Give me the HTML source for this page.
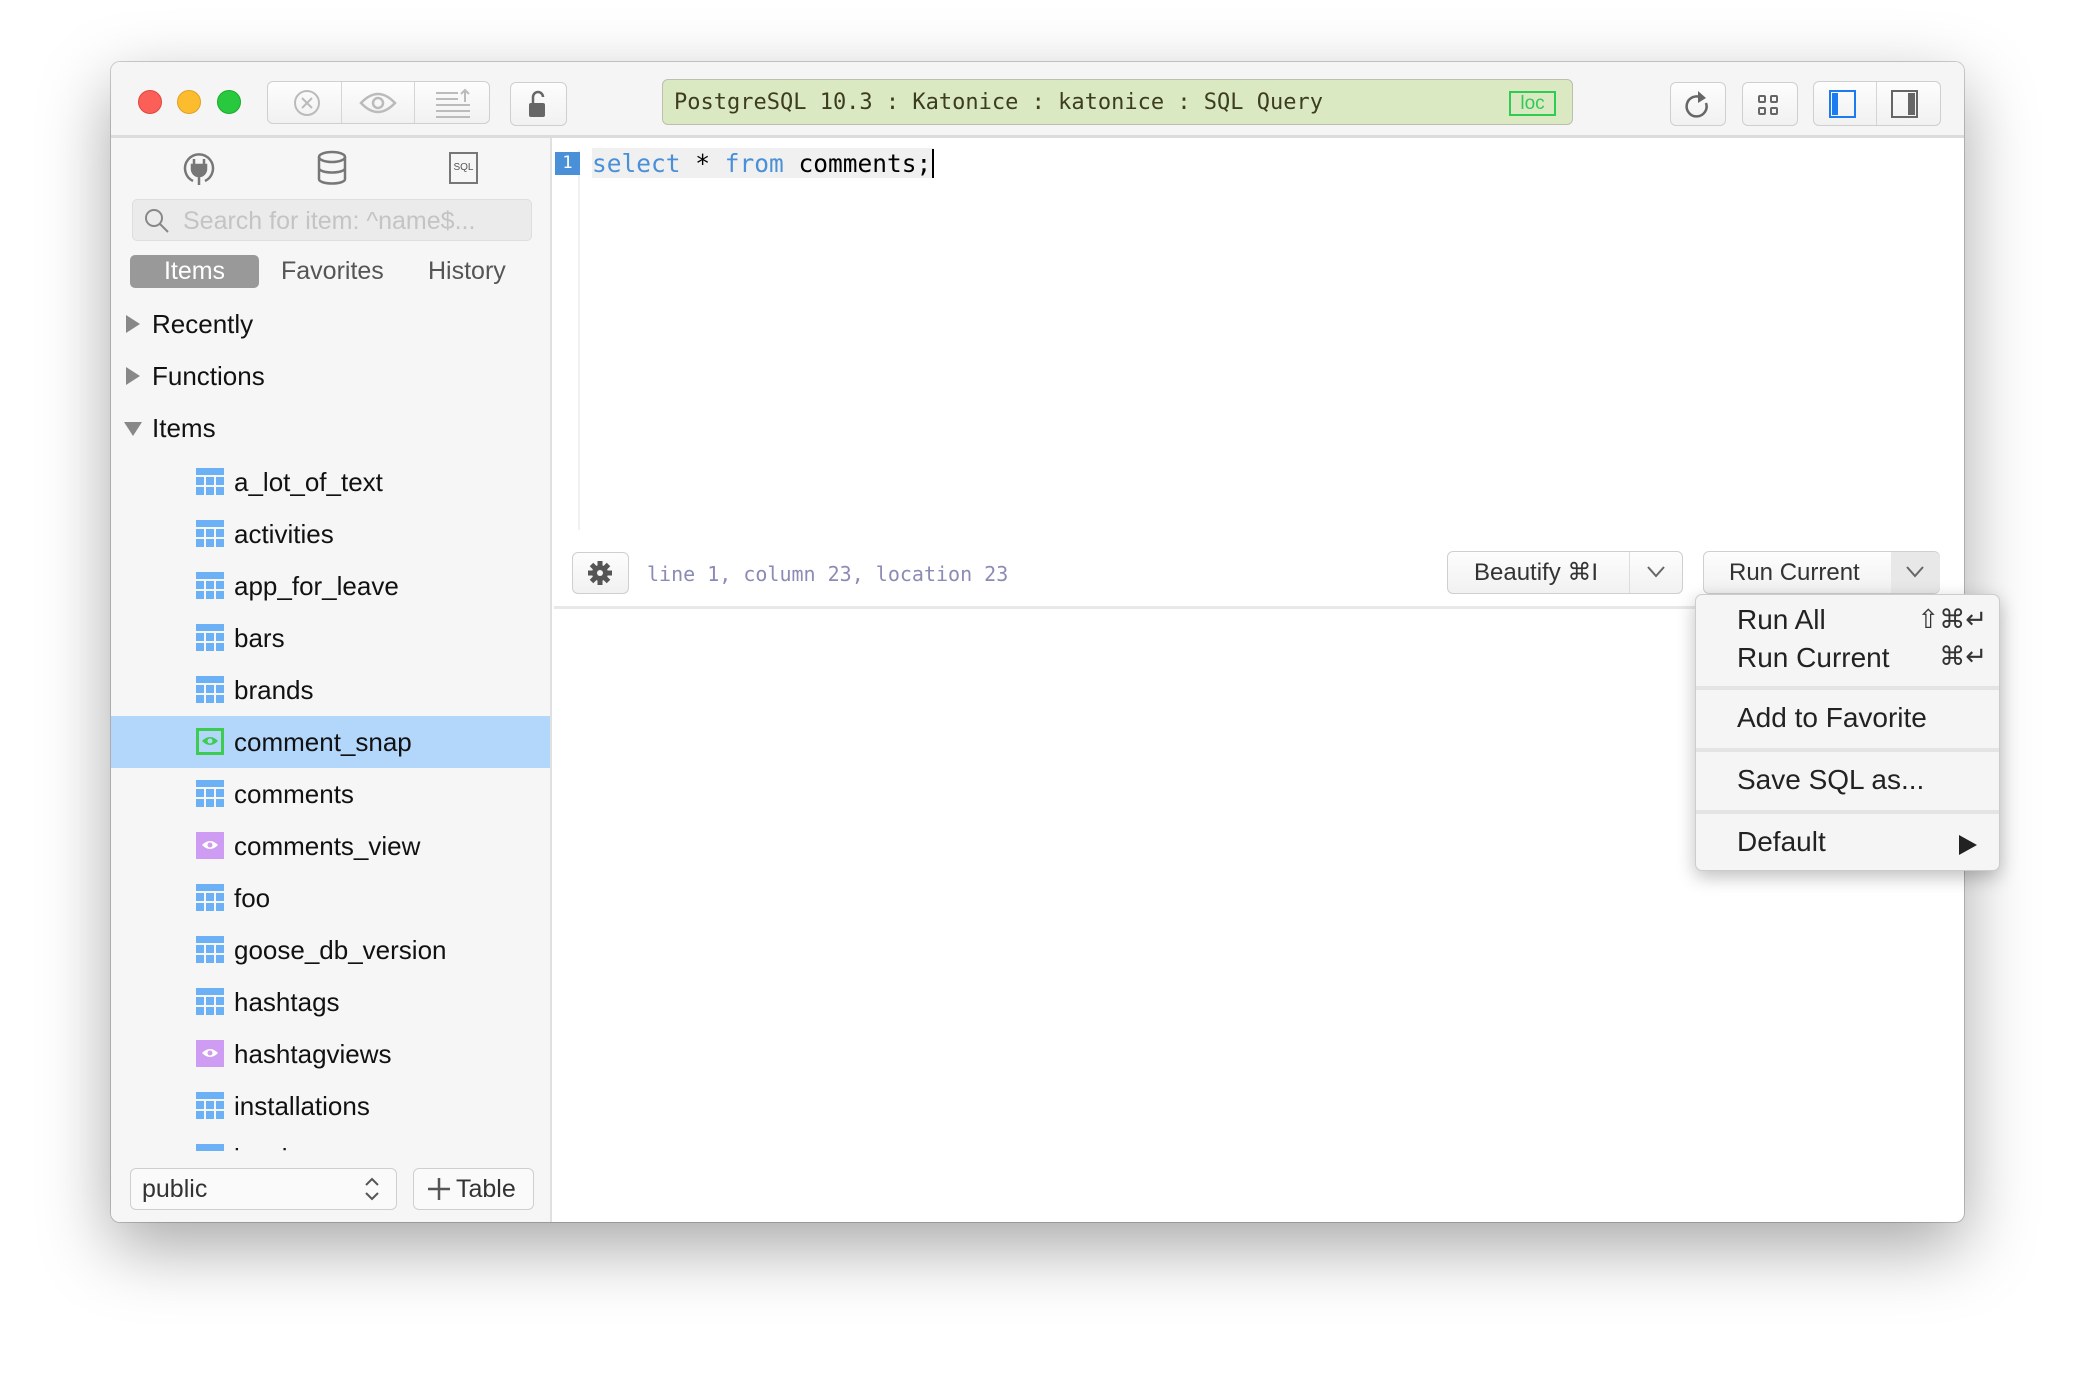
<!DOCTYPE html>
<html><head><meta charset="utf-8"><style>
*{box-sizing:border-box;margin:0;padding:0}
body{width:2076px;height:1384px;background:#fff;position:relative;overflow:hidden;font-family:"Liberation Sans",sans-serif}
.a{position:absolute}
.win{left:111px;top:62px;width:1853px;height:1160px;border-radius:9px;background:#fff;box-shadow:0 25px 70px rgba(0,0,0,.35),0 0 0 1px rgba(0,0,0,.18);overflow:hidden}
.tb{left:0;top:0;width:1853px;height:76px;background:#f5f5f5;border-bottom:3px solid #dcdcdc}
.btn{background:linear-gradient(#fdfdfd,#f1f1f1);border:1px solid #cfcfcf;border-radius:6px}
.dot{width:24px;height:24px;border-radius:50%}
.side{left:0;top:76px;width:441px;height:1084px;background:#f6f6f6;border-right:2px solid #e0e0e0}
.row{position:absolute;left:0;width:439px;height:52px;font-size:26px;color:#111;line-height:52px}
.ti{position:absolute;left:85px;top:12px;width:28px;height:27px}
.row span{position:absolute;left:123px}
.mono{font-family:"DejaVu Sans Mono","Liberation Mono",monospace}
.mi{position:absolute;left:41px;font-size:28px;color:#222}
.sep{position:absolute;left:0;width:304px;height:4px;background:#e4e4e4}
</style></head><body>
<div class="a win">
 <div class="a tb">
  <div class="a dot" style="left:27px;top:28px;background:#fc5f57;border:1px solid #e0443e"></div>
  <div class="a dot" style="left:66px;top:28px;background:#fdbc2e;border:1px solid #dea123"></div>
  <div class="a dot" style="left:106px;top:28px;background:#28c83f;border:1px solid #1aab29"></div>
  <div class="a btn" style="left:156px;top:19px;width:223px;height:43px"></div>
  <div class="a" style="left:230px;top:20px;width:1px;height:41px;background:#d5d5d5"></div>
  <div class="a" style="left:303px;top:20px;width:1px;height:41px;background:#d5d5d5"></div>
  <svg class="a" style="left:180px;top:25px" width="32" height="32" viewBox="0 0 32 32"><circle cx="16" cy="16" r="12" fill="none" stroke="#bbb" stroke-width="2"/><path d="M11 11l10 10M21 11l-10 10" stroke="#bbb" stroke-width="2"/></svg>
  <svg class="a" style="left:248px;top:27px" width="38" height="28" viewBox="0 0 38 28"><path d="M2 14Q19 -4 36 14Q19 32 2 14Z" fill="none" stroke="#bbb" stroke-width="2.5"/><circle cx="19" cy="14" r="5" fill="none" stroke="#bbb" stroke-width="2.5"/></svg>
  <svg class="a" style="left:324px;top:26px" width="36" height="30" viewBox="0 0 36 30"><path d="M1 5h22M1 11h22M1 17h34M1 23h34M1 29h34M30 2v12M26 6l4-4 4 4" stroke="#bbb" stroke-width="2" fill="none"/></svg>
  <div class="a btn" style="left:399px;top:20px;width:57px;height:44px"></div>
  <svg class="a" style="left:416px;top:27px" width="22" height="30" viewBox="0 0 22 30"><path d="M6 14V8a5 5 0 0 1 10 0" fill="none" stroke="#666" stroke-width="2.5"/><rect x="2" y="14" width="16" height="14" rx="2" fill="#666"/></svg>
  <div class="a mono" style="left:551px;top:17px;width:911px;height:46px;background:#dbe9c3;border:1px solid #bdbdb0;border-radius:6px;font-size:22px;line-height:46px;padding-left:11px;color:#3c3c1e">PostgreSQL 10.3 : Katonice : katonice : SQL Query</div>
  <div class="a" style="left:1398px;top:29px;width:47px;height:25px;border:2px solid #2ecc55;color:#2ecc55;font-size:19px;line-height:21px;text-align:center">loc</div>
  <div class="a btn" style="left:1559px;top:20px;width:56px;height:44px"></div>
  <svg class="a" style="left:1573px;top:27px" width="28" height="32" viewBox="0 0 28 32"><path d="M18 9A10 10 0 1 0 22 14" fill="none" stroke="#666" stroke-width="2.5"/><path d="M14 2l8 7-8 5z" fill="#666"/></svg>
  <div class="a btn" style="left:1631px;top:20px;width:56px;height:44px"></div>
  <svg class="a" style="left:1645px;top:31px" width="24" height="24" viewBox="0 0 24 24"><g fill="none" stroke="#666" stroke-width="2"><rect x="3" y="3" width="6" height="6" rx="1"/><rect x="15" y="3" width="6" height="6" rx="1"/><rect x="3" y="15" width="6" height="6" rx="1"/><rect x="15" y="15" width="6" height="6" rx="1"/></g></svg>
  <div class="a btn" style="left:1702px;top:19px;width:128px;height:45px"></div>
  <div class="a" style="left:1765px;top:20px;width:1px;height:43px;background:#d5d5d5"></div>
  <div class="a" style="left:1718px;top:28px;width:27px;height:28px;border:2px solid #1a7cf0"></div>
  <div class="a" style="left:1721px;top:31px;width:6px;height:22px;background:#1a7cf0"></div>
  <div class="a" style="left:1780px;top:28px;width:27px;height:28px;border:2px solid #666"></div>
  <div class="a" style="left:1797px;top:31px;width:7px;height:22px;background:#666"></div>
 </div>

 <div class="a side">
  <svg class="a" style="left:70px;top:12px" width="36" height="36" viewBox="0 0 36 36"><path d="M12 31A14 14 0 1 1 24 31" fill="none" stroke="#777" stroke-width="2.5"/><path d="M13 9v6M23 9v6M11 15h14v4a7 7 0 0 1-14 0zM18 26v9" stroke="#777" stroke-width="2.5" fill="#777"/></svg>
  <svg class="a" style="left:204px;top:12px" width="34" height="36" viewBox="0 0 34 36"><g fill="none" stroke="#777" stroke-width="2.5"><ellipse cx="17" cy="7" rx="13" ry="5"/><path d="M4 7v22c0 6 26 6 26 0V7M4 18c0 6 26 6 26 0"/></g></svg>
  <div class="a" style="left:338px;top:14px;width:29px;height:32px;border:2px solid #777;font-size:10px;color:#555;text-align:center;line-height:28px">SQL</div>
  <div class="a" style="left:21px;top:61px;width:400px;height:42px;background:#ebebeb;border:1px solid #dedede;border-radius:5px"></div>
  <svg class="a" style="left:33px;top:70px" width="26" height="26" viewBox="0 0 26 26"><circle cx="10" cy="10" r="8" fill="none" stroke="#888" stroke-width="2"/><path d="M16 16l8 8" stroke="#888" stroke-width="2"/></svg>
  <div class="a" style="left:72px;top:69px;font-size:25px;color:#c4c4c4">Search for item: ^name$...</div>
  <div class="a" style="left:19px;top:117px;width:129px;height:33px;background:#999;border-radius:5px;color:#fff;font-size:25px;line-height:33px;text-align:center">Items</div>
  <div class="a" style="left:170px;top:117px;font-size:25px;line-height:33px;color:#555">Favorites</div>
  <div class="a" style="left:317px;top:117px;font-size:25px;line-height:33px;color:#555">History</div>
  <div class="row" style="top:160px"><svg class="a" style="left:15px;top:17px" width="14" height="18"><path d="M0 0l14 9-14 9z" fill="#888"/></svg><span style="left:41px">Recently</span></div>
  <div class="row" style="top:212px"><svg class="a" style="left:15px;top:17px" width="14" height="18"><path d="M0 0l14 9-14 9z" fill="#888"/></svg><span style="left:41px">Functions</span></div>
  <div class="row" style="top:264px"><svg class="a" style="left:13px;top:20px" width="18" height="14"><path d="M0 0h18l-9 14z" fill="#888"/></svg><span style="left:41px">Items</span></div>
  <div class="a" style="left:0;top:318px;width:439px;height:696px;overflow:hidden">
   <div class="row" style="top:0"><svg class="ti"><use href="#tbl"/></svg><span>a_lot_of_text</span></div>
   <div class="row" style="top:52px"><svg class="ti"><use href="#tbl"/></svg><span>activities</span></div>
   <div class="row" style="top:104px"><svg class="ti"><use href="#tbl"/></svg><span>app_for_leave</span></div>
   <div class="row" style="top:156px"><svg class="ti"><use href="#tbl"/></svg><span>bars</span></div>
   <div class="row" style="top:208px"><svg class="ti"><use href="#tbl"/></svg><span>brands</span></div>
   <div class="row" style="top:260px;background:#b3d6fb"><svg class="ti" viewBox="0 0 28 27"><rect x="1.5" y="1.5" width="25" height="24" fill="none" stroke="#3dcc4f" stroke-width="3"/><path d="M6 13Q14 5 22 13Q14 21 6 13Z" fill="#3dcc4f"/><circle cx="14" cy="13" r="2.5" fill="#b3d6fb"/></svg><span>comment_snap</span></div>
   <div class="row" style="top:312px"><svg class="ti"><use href="#tbl"/></svg><span>comments</span></div>
   <div class="row" style="top:364px"><svg class="ti"><use href="#view"/></svg><span>comments_view</span></div>
   <div class="row" style="top:416px"><svg class="ti"><use href="#tbl"/></svg><span>foo</span></div>
   <div class="row" style="top:468px"><svg class="ti"><use href="#tbl"/></svg><span>goose_db_version</span></div>
   <div class="row" style="top:520px"><svg class="ti"><use href="#tbl"/></svg><span>hashtags</span></div>
   <div class="row" style="top:572px"><svg class="ti"><use href="#view"/></svg><span>hashtagviews</span></div>
   <div class="row" style="top:624px"><svg class="ti"><use href="#tbl"/></svg><span>installations</span></div>
   <div class="row" style="top:676px"><svg class="ti"><use href="#tbl"/></svg><span>invoices</span></div>
  </div>
  <div class="a btn" style="left:19px;top:1030px;width:267px;height:42px;background:#fafafa"></div>
  <div class="a" style="left:31px;top:1030px;font-size:25px;line-height:42px;color:#333">public</div>
  <svg class="a" style="left:252px;top:1038px" width="18" height="26" viewBox="0 0 18 26"><path d="M3 9l6-6 6 6M3 17l6 6 6-6" fill="none" stroke="#555" stroke-width="2"/></svg>
  <div class="a btn" style="left:302px;top:1030px;width:121px;height:42px;background:#fafafa;font-size:25px;line-height:40px;color:#333;padding-left:42px">Table</div>
  <svg class="a" style="left:316px;top:1039px" width="24" height="24"><path d="M12 1v22M1 12h22" stroke="#555" stroke-width="2.5"/></svg>
 </div>

 <svg width="0" height="0" style="position:absolute"><defs>
  <g id="tbl"><rect x="0" y="0" width="28" height="7" fill="#6cb0f5"/><g fill="#6cb0f5"><rect x="0" y="9" width="8" height="8"/><rect x="10" y="9" width="8" height="8"/><rect x="20" y="9" width="8" height="8"/><rect x="0" y="19" width="8" height="8"/><rect x="10" y="19" width="8" height="8"/><rect x="20" y="19" width="8" height="8"/></g></g>
  <g id="view"><rect width="28" height="27" fill="#cf9cf3"/><path d="M6 13Q14 5 22 13Q14 21 6 13Z" fill="#fff"/><circle cx="14" cy="13" r="2.5" fill="#cf9cf3"/></g>
 </defs></svg>

 <!-- editor -->
 <div class="a" style="left:467px;top:88px;width:2px;height:380px;background:#f1f1f1"></div>
 <div class="a mono" style="left:444px;top:90px;width:25px;height:23px;background:#4a90d9;color:#fff;font-size:17px;line-height:23px;text-align:center">1</div>
 <div class="a mono" style="left:481px;top:86px;font-size:24.5px;line-height:31px;white-space:pre;color:#000;background:#f0f0f0;height:30px"><span style="color:#4a90d9">select</span> * <span style="color:#4a90d9">from</span> comments;<span style="border-left:2px solid #000;margin-left:1px"></span></div>

 <div class="a btn" style="left:461px;top:490px;width:57px;height:42px"></div>
 <svg class="a" style="left:475px;top:497px" width="28" height="28" viewBox="0 0 28 28"><g stroke="#555" stroke-width="5"><path d="M14 2v24M2 14h24M5.5 5.5l17 17M22.5 5.5l-17 17"/></g><circle cx="14" cy="14" r="8" fill="#555"/><circle cx="14" cy="14" r="3" fill="#f5f5f5"/></svg>
 <div class="a mono" style="left:536px;top:499px;font-size:20px;line-height:26px;color:#8b8bb5">line 1, column 23, location 23</div>
 <div class="a btn" style="left:1336px;top:489px;width:236px;height:43px"></div>
 <div class="a" style="left:1518px;top:490px;width:1px;height:41px;background:#ddd"></div>
 <div class="a" style="left:1363px;top:489px;font-size:24px;line-height:43px;color:#333">Beautify ⌘I</div>
 <svg class="a" style="left:1535px;top:503px" width="20" height="14"><path d="M2 2l8 9 8-9" fill="none" stroke="#666" stroke-width="2"/></svg>
 <div class="a btn" style="left:1592px;top:489px;width:237px;height:43px"></div>
 <div class="a" style="left:1780px;top:490px;width:49px;height:41px;background:#e8e8e8;border-radius:0 6px 6px 0"></div>
 <div class="a" style="left:1618px;top:489px;font-size:24px;line-height:43px;color:#333">Run Current</div>
 <svg class="a" style="left:1794px;top:503px" width="20" height="14"><path d="M2 2l8 9 8-9" fill="none" stroke="#666" stroke-width="2"/></svg>
 <div class="a" style="left:443px;top:544px;width:1410px;height:3px;background:#e8e8e8"></div>
</div>

<!-- menu -->
<div class="a" style="left:1695px;top:594px;width:305px;height:277px;background:#f5f5f5;border:1px solid #ccc;border-radius:7px;box-shadow:0 6px 18px rgba(0,0,0,.25);overflow:hidden">
 <div class="mi" style="top:9px">Run All</div>
 <div class="a" style="right:12px;top:9px;font-size:26px;color:#333">⇧⌘↵</div>
 <div class="mi" style="top:47px">Run Current</div>
 <div class="a" style="right:12px;top:46px;font-size:26px;color:#333">⌘↵</div>
 <div class="sep" style="top:91px"></div>
 <div class="mi" style="top:107px">Add to Favorite</div>
 <div class="sep" style="top:153px"></div>
 <div class="mi" style="top:169px">Save SQL as...</div>
 <div class="sep" style="top:215px"></div>
 <div class="mi" style="top:231px">Default</div>
 <svg class="a" style="left:263px;top:240px" width="18" height="20"><path d="M0 0l18 10-18 10z" fill="#222"/></svg>
</div>
</body></html>
